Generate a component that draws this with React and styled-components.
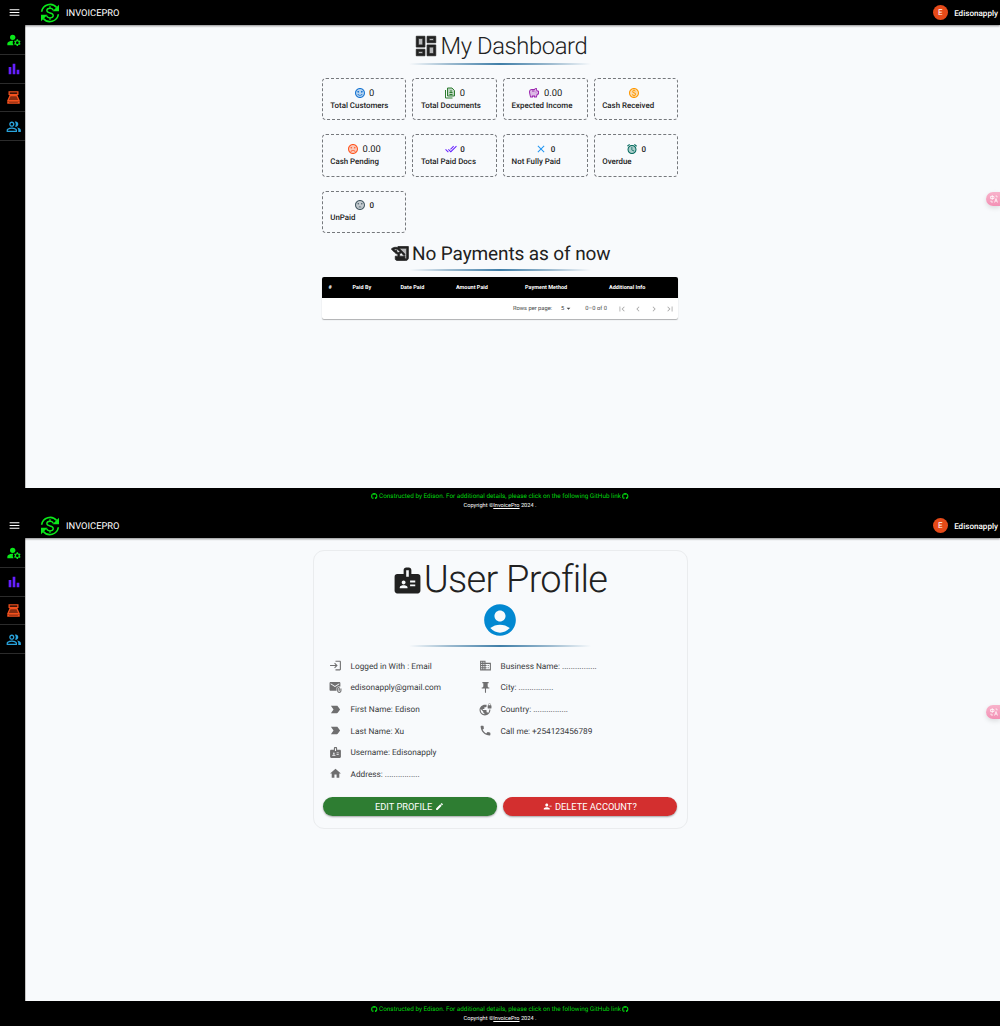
import React from "react";
import styled, { createGlobalStyle } from "styled-components";
import {
  MdMenu, MdBarChart, MdOutlinePeopleAlt, MdManageAccounts,
  MdOutlineSavings, MdOutlinePaid, MdDoneAll, MdClose, MdAlarm, MdOutlineHistoryEdu,
  MdSentimentSatisfiedAlt, MdSentimentVeryDissatisfied, MdSentimentDissatisfied,
  MdArrowDropDown, MdFirstPage, MdChevronLeft, MdChevronRight, MdLastPage,
  MdBadge, MdAccountCircle, MdLogin, MdAttachEmail, MdLabelImportant, MdHome,
  MdBusiness, MdPushPin, MdVpnLock, MdPhone, MdEdit, MdPersonRemove,
} from "react-icons/md";
import { FaGithub } from "react-icons/fa";

const GlobalStyle = createGlobalStyle`
  * { box-sizing: border-box; }
  body {
    margin: 0;
    background: #f8fafc;
    font-family: Roboto, "Liberation Sans", sans-serif;
    color: #212121;
    text-rendering: geometricPrecision;
  }
  svg { display: block; flex: none; }
  path[fill="none"]:not([stroke]) { stroke: none; }
`;

const Screen = styled.div`
  position: relative;
  height: 513px;
  overflow: hidden;
  display: flex;
  flex-direction: column;
`;
const TopBar = styled.header`
  height: 25px;
  flex: none;
  display: flex;
  align-items: center;
  padding: 0 2px 0 8px;
  background: #000;
  color: #fff;
  box-shadow: 0 1px 2px rgba(0, 0, 0, 0.45);
  z-index: 1;
`;
const Brand = styled.span`
  margin-left: 6.5px;
  padding-top: 1px;
  font-size: 9.35px;
  font-weight: 400;
  flex: 1;
`;
const Logo = styled.span`
  margin-left: 18.5px;
  color: #0be81a;
`;
const Avatar = styled.span`
  width: 15.5px;
  height: 15.5px;
  border-radius: 50%;
  background: #e64a19;
  font-size: 8px;
  display: grid;
  place-items: center;
`;
const UserName = styled.span`
  margin-left: 6px;
  font-size: 8.1px;
  font-weight: 500;
`;
const Body = styled.div`
  flex: 1;
  display: flex;
  min-height: 0;
`;
const Sidebar = styled.nav`
  width: 26px;
  padding-top: 1px;
  background: #000;
  border-right: 1px solid #c4c4c4;
  display: flex;
  flex-direction: column;
`;
const NavItem = styled.div`
  height: 28.8px;
  padding-left: 2.5px;
  display: flex;
  align-items: center;
  justify-content: center;
  color: ${(p) => p.$color};
  border-bottom: 1px solid #2b2b2b;
`;
const Main = styled.main`
  flex: 1;
  padding: ${(p) => p.$top}px 26px 0 0;
  display: flex;
  flex-direction: column;
  align-items: center;
`;
const Heading = styled.h1`
  margin: 0;
  height: ${(p) => p.$height}px;
  padding-top: ${(p) => p.$drop || 0}px;
  display: flex;
  align-items: center;
  gap: ${(p) => p.$gap}px;
  font-size: ${(p) => p.$size}px;
  font-weight: ${(p) => p.$weight};
  letter-spacing: ${(p) => p.$spacing || 0}px;
  white-space: nowrap;
`;
const Rule = styled.div`
  width: 182px;
  height: 2px;
  margin-bottom: ${(p) => p.$after}px;
  background: linear-gradient(to right, transparent, #9dbbd0 22%, #3f7ea8 50%, #9dbbd0 78%, transparent);
`;
const CardGrid = styled.div`
  width: 356.5px;
  display: grid;
  grid-template-columns: repeat(4, 84.5px);
  justify-content: space-between;
  align-items: start;
  grid-auto-rows: 42.5px;
  row-gap: 13.8px;
`;
const Card = styled.section`
  height: ${(p) => (p.$short ? 41.5 : 42.3)}px;
  padding: ${(p) => (p.$short ? 7.5 : 7.8)}px 7.5px 0;
  border: 1px dashed #75787c;
  border-radius: 4px;
`;
const Metric = styled.div`
  height: 12px;
  display: flex;
  align-items: center;
  justify-content: center;
  gap: 3.5px;
  font-size: ${(p) => (p.$bold ? 8 : 9.4)}px;
  font-weight: ${(p) => (p.$bold ? 500 : 400)};
`;
const Value = styled.span`
  padding-top: 1px;
`;
const Tint = styled.span`
  color: ${(p) => p.$color};
`;
const CardLabel = styled.div`
  height: 13px;
  line-height: 13.6px;
  font-size: 7.9px;
  font-weight: 500;
  white-space: nowrap;
`;
const Table = styled.div`
  width: 356px;
  border-radius: 2px;
  overflow: hidden;
  background: #fff;
  box-shadow: 0 1px 1px rgba(0, 0, 0, 0.3);
`;
const TableHead = styled.div`
  height: 21.7px;
  padding-top: 1px;
  display: grid;
  grid-template-columns: 24px 48px 55.5px 69px 84px 1fr;
  align-items: center;
  background: #000;
  color: #fff;
  font-size: 5.5px;
  font-weight: 700;
`;
const HeadCell = styled.span`
  padding-left: 6.5px;
`;
const Pager = styled.div`
  height: 21px;
  display: flex;
  align-items: center;
  justify-content: flex-end;
  padding-right: 3.5px;
  font-size: 5.75px;
  color: #444;
`;
const PageSize = styled.span`
  margin: 0 12px 0 9px;
  display: flex;
  align-items: center;
`;
const PageButtons = styled.span`
  margin-left: 10.5px;
  display: flex;
  gap: 5.7px;
  color: #a8a8a8;
`;
const Footer = styled.footer`
  height: 25px;
  flex: none;
  padding-top: 3px;
  background: #000;
  display: flex;
  flex-direction: column;
  align-items: center;
`;
const Credit = styled.div`
  height: 10px;
  display: flex;
  align-items: center;
  gap: 1.2px;
  color: #00d60e;
  font-size: 6.38px;
`;
const Copyright = styled.div`
  height: 10px;
  line-height: 10px;
  color: #fff;
  font-size: 5.6px;
`;
const Translate = styled.div`
  position: absolute;
  top: 192px;
  right: 0;
  width: 14px;
  height: 14px;
  padding-left: 4px;
  display: flex;
  align-items: center;
  border-radius: 7px 0 0 7px;
  background: linear-gradient(#f8b3cb, #f391b5);
  box-shadow: 0 2px 5px rgba(0, 0, 0, 0.12);
`;
const ProfileCard = styled.section`
  width: 375px;
  height: 279px;
  padding: 8px 9.5px 0 9px;
  border: 1px solid #eaecee;
  border-radius: 11px;
  display: flex;
  flex-direction: column;
  align-items: center;
`;
const AvatarLarge = styled.div`
  height: 38px;
  margin-bottom: 6px;
  color: #0288d1;
`;
const Details = styled.div`
  width: 100%;
  display: grid;
  grid-template-columns: 150px 1fr;
  height: 130px;
`;
const Detail = styled.div`
  height: 21.64px;
  padding-left: 6.5px;
  display: flex;
  align-items: center;
  gap: 8.5px;
  font-size: 8.25px;
  color: #37393b;
  svg { color: #6f6f70; }
`;
const DetailText = styled.span`
  padding-top: 1.8px;
`;
const Actions = styled.div`
  width: 100%;
  margin-top: 12px;
  display: flex;
  gap: 6px;
`;
const Button = styled.button`
  flex: 1;
  height: 19px;
  padding: 0;
  border: 0;
  border-radius: 10px;
  display: flex;
  align-items: center;
  justify-content: center;
  gap: 3px;
  background: ${(p) => p.$color};
  color: #fff;
  font: 400 9.3px Roboto, sans-serif;
  box-shadow: 0 1px 2px rgba(0, 0, 0, 0.35);
`;

function Duotone({ icon: Icon, fill, size, thick }) {
  return (
    <svg viewBox="0 0 24 24" width={size} height={size} fill="currentColor" overflow="visible">
      <path d={fill} opacity=".3" />
      <Icon size={24} stroke="currentColor" strokeWidth={thick || 0} />
    </svg>
  );
}

const DISC = "M12 3a9 9 0 1 0 0 18 9 9 0 0 0 0-18z";

function LogoIcon() {
  return (
    <svg viewBox="0 0 24 24" width="20" height="20" fill="none" stroke="currentColor" strokeWidth="2">
      <path d="M2 10.500A10.200 10.200 0 0 1 20 5.500M22 13.500A10.200 10.200 0 0 1 4 18.500" />
      <path d="M22.800 2.200v7.800H15zM1.200 21.800V14H9z" fill="currentColor" stroke="none" />
      <path strokeWidth="1.7" d="M15.800 8.700C15.400 7.200 14 6.300 12 6.300c-2.300 0-3.800 1-3.800 2.700 0 4 7.700 2 7.700 6 0 1.700-1.600 2.800-3.900 2.800-2.200 0-3.600-1-4-2.600M12 4v2.300M12 17.800V20" />
    </svg>
  );
}

function RegisterIcon() {
  return (
    <svg viewBox="0 0 24 24" width="15" height="15" fill="none" stroke="currentColor" strokeWidth="2">
      <path d="M5 3h14v4H5zM7 7v2M17 7v2" />
      <path d="M6.500 9h11L21 17H3z" fill="currentColor" fillOpacity=".55" />
      <path d="M2 18h20v4H2z" fill="currentColor" stroke="none" />
      <path d="M5 20h14" stroke="#7a2610" strokeWidth="1" />
    </svg>
  );
}

function DashboardIcon({ size }) {
  return (
    <svg viewBox="0 0 24 24" width={size} height={size} fill="currentColor">
      <path opacity=".3" d="M5 5h4v6H5zm10 8h4v6h-4zM5 17h4v2H5zM15 5h4v2h-4z" />
      <path stroke="currentColor" strokeWidth=".7" d="M3 13h8V3H3v10zm2-8h4v6H5V5zm8 16h8V11h-8v10zm2-8h4v6h-4v-6zM13 3v6h8V3h-8zm6 4h-4V5h4v2zM3 21h8v-6H3v6zm2-4h4v2H5v-2z" />
    </svg>
  );
}

function DocumentsIcon() {
  return (
    <svg viewBox="0 0 24 24" width="12" height="12" fill="none" stroke="currentColor" strokeWidth="2">
      <path d="M7 2h9l5 5v11H7z" fill="currentColor" fillOpacity=".3" />
      <path d="M3 6v16h14M11 15h6M11 11h6M14 6v5" />
    </svg>
  );
}

const smile = <Duotone icon={MdSentimentSatisfiedAlt} fill={DISC} size={12} />;
const angry = <Duotone icon={MdSentimentVeryDissatisfied} fill={DISC} size={12} />;
const sad = <Duotone icon={MdSentimentDissatisfied} fill={DISC} size={12} />;
const savings = <Duotone icon={MdOutlineSavings} size={12} fill="M7 6h8l4 4 2 1v4l-3 1-1 4H6L3 12c0-4 2-6 4-6z" />;
const coin = <Duotone icon={MdOutlinePaid} fill={DISC} size={12} />;
const alarm = <Duotone icon={MdAlarm} size={12} fill="M12 5a8 8 0 1 0 0 16 8 8 0 0 0 0-16z" />;

const METRICS = [
  { label: "Total Customers", value: "0", color: "#1976d2", icon: smile },
  { label: "Total Documents", value: "0", color: "#2e7d32", icon: <DocumentsIcon /> },
  { label: "Expected Income", value: "0.00", color: "#9c27b0", icon: savings },
  { label: "Cash Received", value: "", color: "#ff9800", icon: coin, short: true },
  { label: "Cash Pending", value: "0.00", color: "#ff5722", icon: angry },
  { label: "Total Paid Docs", value: "0", color: "#651fff", icon: <MdDoneAll size={12} />, bold: true },
  { label: "Not Fully Paid", value: "0", color: "#2196f3", icon: <MdClose size={12} />, bold: true },
  { label: "Overdue", value: "0", color: "#00695c", icon: alarm, bold: true },
  { label: "UnPaid", value: "0", color: "#455a64", icon: sad, bold: true },
];

const COLUMNS = ["#", "Paid By", "Date Paid", "Amount Paid", "Payment Method", "Additional Info"];

const PERSONAL = [
  [MdLogin, "Logged in With : Email"],
  [MdAttachEmail, "edisonapply@gmail.com"],
  [MdLabelImportant, "First Name: Edison"],
  [MdLabelImportant, "Last Name: Xu"],
  [MdBadge, "Username: Edisonapply"],
  [MdHome, "Address: ................"],
];
const BUSINESS = [
  [MdBusiness, "Business Name: ................"],
  [MdPushPin, "City: ................"],
  [MdVpnLock, "Country: ................"],
  [MdPhone, "Call me: +254123456789"],
];

function Layout({ top, children }) {
  return (
    <Screen>
      <TopBar>
        <MdMenu size={13} />
        <Logo><LogoIcon /></Logo>
        <Brand>INVOICEPRO</Brand>
        <Avatar>E</Avatar>
        <UserName>Edisonapply</UserName>
      </TopBar>
      <Body>
        <Sidebar>
          <NavItem $color="#0be81a"><MdManageAccounts size={16} /></NavItem>
          <NavItem $color="#651fff"><MdBarChart size={16} /></NavItem>
          <NavItem $color="#f4511e"><RegisterIcon /></NavItem>
          <NavItem $color="#29a3dc"><MdOutlinePeopleAlt size={15.5} /></NavItem>
        </Sidebar>
        <Main $top={top}>{children}</Main>
      </Body>
      <Footer>
        <Credit>
          <FaGithub size={6.5} />
          <span>Constructed by Edison. For additional details, please click on the following GitHub link</span>
          <FaGithub size={6.5} />
        </Credit>
        <Copyright>Copyright ©<u>InvoicePro</u> 2024 .</Copyright>
      </Footer>
      <Translate>
        <svg viewBox="0 0 16 16" width="8" height="8" fill="none" stroke="#fff" strokeWidth="1.4">
          <path d="M1 3h7v4H1zM4.500 0v10M9 15l3-8 3 8M10 12h4M11 2h3v3M2 11v3h4" />
        </svg>
      </Translate>
    </Screen>
  );
}

function Dashboard() {
  return (
    <Layout top={4}>
      <Heading $height={34} $size={23.8} $weight={300} $spacing={-0.4} $gap={1.8}>
        <DashboardIcon size={26} />My Dashboard
      </Heading>
      <Rule $after={13} />
      <CardGrid>
        {METRICS.map((m) => (
          <Card key={m.label} $short={m.short}>
            <Metric $bold={m.bold}>
              <Tint $color={m.color}>{m.icon}</Tint>
              <Value>{m.value}</Value>
            </Metric>
            <CardLabel>{m.label}</CardLabel>
          </Card>
        ))}
      </CardGrid>
      <Heading $height={36} $drop={5.5} $size={19} $weight={400} $gap={1.5} $spacing={-0.11}>
        <Duotone icon={MdOutlineHistoryEdu} size={21} thick={0.8} fill="M9 4h12v14H11l6-4-8-6z" />
        No Payments as of now
      </Heading>
      <Rule $after={5.5} />
      <Table>
        <TableHead>{COLUMNS.map((c) => <HeadCell key={c}>{c}</HeadCell>)}</TableHead>
        <Pager>
          Rows per page:
          <PageSize>5<MdArrowDropDown size={9} /></PageSize>
          0–0 of 0
          <PageButtons>
            <MdFirstPage size={10} />
            <MdChevronLeft size={10} />
            <MdChevronRight size={10} />
            <MdLastPage size={10} />
          </PageButtons>
        </Pager>
      </Table>
    </Layout>
  );
}

function DetailList({ items }) {
  return (
    <div>
      {items.map(([Icon, text]) => (
        <Detail key={text}><Icon size={13} /><DetailText>{text}</DetailText></Detail>
      ))}
    </div>
  );
}

function Profile() {
  return (
    <Layout top={12}>
      <ProfileCard>
        <Heading $height={42} $size={38} $weight={300} $spacing={-0.75} $gap={0.5}>
          <MdBadge size={31} />User Profile
        </Heading>
        <AvatarLarge><MdAccountCircle size={38} /></AvatarLarge>
        <Rule $after={8} />
        <Details>
          <DetailList items={PERSONAL} />
          <DetailList items={BUSINESS} />
        </Details>
        <Actions>
          <Button $color="#2e7d32">EDIT PROFILE <MdEdit size={9} /></Button>
          <Button $color="#d32f2f"><MdPersonRemove size={9} /> DELETE ACCOUNT?</Button>
        </Actions>
      </ProfileCard>
    </Layout>
  );
}

export default function App() {
  return (
    <>
      <GlobalStyle />
      <Dashboard />
      <Profile />
    </>
  );
}
